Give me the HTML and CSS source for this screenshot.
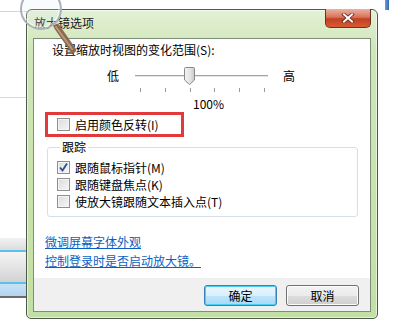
FILE: index.html
```html
<!DOCTYPE html>
<html lang="zh-CN">
<head>
<meta charset="utf-8">
<title>放大镜选项</title>
<link rel="stylesheet" href="styles.css">
</head>
<body>
<div class="desktop">
  <div class="bg-line top"></div>
  <div class="bg-line mid"></div>
  <div class="bg-blue"></div>
  <div class="bg-bars">
    <div class="bar b1"></div>
    <div class="bar blue"></div>
    <div class="bar b2"></div>
    <div class="bar blue"></div>
    <div class="bar b3"></div>
    <div class="bar dark"></div>
  </div>

  <div class="window">
    <div class="titlebar">
      <span class="title">放大镜选项</span>
      <span class="close">
        <svg width="16" height="10" viewBox="0 0 16 10"><path d="M4 1.5 L12 8.5 M12 1.5 L4 8.5" stroke="#6a2418" stroke-width="3.6" stroke-linecap="square"/><path d="M4 1.5 L12 8.5 M12 1.5 L4 8.5" stroke="#ffffff" stroke-width="2" stroke-linecap="square"/></svg>
      </span>
    </div>
    <div class="client">
      <div class="content">
        <div class="label">设置缩放时视图的变化范围(S):</div>
        <div class="slider-row">
          <span class="end">低</span>
          <span class="track">
            <span class="thumb">
              <svg width="11" height="18" viewBox="0 0 11 18"><defs><linearGradient id="tg" x1="0" y1="0" x2="1" y2="0"><stop offset="0" stop-color="#f4f4f4"/><stop offset="0.6" stop-color="#e2e2e2"/><stop offset="1" stop-color="#c8c8c8"/></linearGradient></defs><path d="M1.5 0.5 H9.5 A1 1 0 0 1 10.5 1.5 V13 L5.5 17.5 L0.5 13 V1.5 A1 1 0 0 1 1.5 0.5 Z" fill="url(#tg)" stroke="#8a8a8a"/></svg>
            </span>
          </span>
          <span class="end">高</span>
        </div>
        <div class="ticks"><i></i><i></i><i></i><i></i><i></i><i></i></div>
        <div class="pct">100%</div>
        <div class="highlight">
          <span class="cb"></span><span>启用颜色反转(I)</span>
        </div>
        <fieldset class="group">
          <legend>跟踪</legend>
          <div class="row"><span class="cb checked"><svg width="11" height="11" viewBox="0 0 11 11"><path d="M2 5.5 L4.5 8.5 L9 1.5" fill="none" stroke="#2c4f8c" stroke-width="1.8"/></svg></span><span>跟随鼠标指针(M)</span></div>
          <div class="row"><span class="cb"></span><span>跟随键盘焦点(K)</span></div>
          <div class="row"><span class="cb"></span><span>使放大镜跟随文本插入点(T)</span></div>
        </fieldset>
        <div class="links">
          <a class="link">微调屏幕字体外观</a>
          <a class="link">控制登录时是否启动放大镜。</a>
        </div>
      </div>
      <div class="footer">
        <button class="btn default">确定</button>
        <button class="btn">取消</button>
      </div>
    </div>
  </div>

  <svg class="lens" width="90" height="60" viewBox="0 0 90 60">
    <defs>
      <linearGradient id="hg" x1="0" y1="0" x2="1" y2="0">
        <stop offset="0" stop-color="#c9ab8c"/>
        <stop offset="1" stop-color="#7d5c42"/>
      </linearGradient>
    </defs>
    <line x1="57" y1="27" x2="73" y2="50" stroke="#8a6a50" stroke-width="6" stroke-linecap="round"/>
    <line x1="56" y1="27" x2="72" y2="49" stroke="#b8987a" stroke-width="2" stroke-linecap="round"/>
    <circle cx="41" cy="9" r="20" fill="rgba(225,232,238,0.18)" stroke="#a9b2ba" stroke-width="2"/>
    <circle cx="41" cy="9" r="18" fill="none" stroke="rgba(255,255,255,0.7)" stroke-width="1"/>
  </svg>
</div>
</body>
</html>
```
FILE: styles.css
```css
html, body {
  margin: 0;
  padding: 0;
  background: #ffffff;
}
body {
  font-family: "Noto Sans CJK SC", "Liberation Sans", sans-serif;
  font-size: 12px;
  color: #000;
}
.desktop {
  position: relative;
  width: 396px;
  height: 328px;
  overflow: hidden;
  background: #ffffff;
}
.bg-line {
  position: absolute;
  left: 0;
  width: 27px;
  height: 1px;
}
.bg-line.top { top: 11px; background: #cdd6de; }
.bg-line.mid { top: 97px; background: #d8d8d8; }
.bg-blue {
  position: absolute;
  left: 385px;
  top: 0;
  width: 4px;
  height: 10px;
  background: linear-gradient(90deg, #6f9fd8, #2f66b8);
}
.bg-bars {
  position: absolute;
  left: 0;
  top: 238px;
  width: 27px;
  display: flex;
  flex-direction: column;
}
.bar.b1 { height: 12px; background: linear-gradient(#f2f2f2, #dcdcdc); }
.bar.blue { height: 2px; background: #5cc0ec; }
.bar.b2 { height: 30px; background: linear-gradient(#f4f4f4, #e4e4e4 50%, #d2d2d2); }
.bar.b3 { height: 12px; background: linear-gradient(#c9e2f6, #b3d4ef); }
.bar.dark { height: 2px; background: #6a6a6a; }

.window {
  position: absolute;
  left: 26px;
  top: 9px;
  width: 352px;
  height: 310px;
  box-sizing: border-box;
  border: 1px solid #4f5a4c;
  border-radius: 6px 6px 5px 5px;
  background: linear-gradient(#e4f1d6, #cfe6b8 40px, #c2dfa4);
  box-shadow: inset 0 0 0 1px rgba(255,255,255,0.55);
}
.titlebar {
  height: 28px;
  display: flex;
  align-items: flex-start;
}
.title {
  padding: 6px 0 0 7px;
  line-height: 14px;
  font-size: 12px;
  color: #1a1a1a;
}
.close {
  margin-left: auto;
  margin-right: 6px;
  margin-top: -1px;
  width: 46px;
  height: 19px;
  box-sizing: border-box;
  border: 1px solid #6d3025;
  border-top: none;
  border-radius: 0 0 5px 5px;
  background: linear-gradient(#eab2a2, #d8745c 45%, #c2401f 55%, #d85a34);
  display: flex;
  align-items: center;
  justify-content: center;
}
.close svg { display: block; }
.client {
  margin: 0 6px;
  height: 274px;
  box-sizing: border-box;
  border: 1px solid #7f8e7a;
  background: #f0f0f0;
  display: flex;
  flex-direction: column;
}
.content {
  height: 239px;
  background: #ffffff;
  padding: 4px 0 0 0;
  box-sizing: border-box;
}
.label {
  line-height: 14px;
  padding-left: 18px;
}
.slider-row {
  margin-top: 10px;
  height: 18px;
  display: flex;
  align-items: center;
  padding-left: 73px;
}
.end { line-height: 14px; }
.track {
  position: relative;
  margin: 0 15px 0 16px;
  width: 133px;
  height: 2px;
  box-sizing: border-box;
  border-top: 1px solid #a3a3a3;
  background: #e6e6e6;
}
.thumb {
  position: absolute;
  left: 49px;
  top: -9px;
  width: 11px;
  height: 18px;
}
.thumb svg { display: block; }
.ticks {
  margin: 3px 0 0 101px;
  width: 133px;
  height: 4px;
  box-sizing: border-box;
  padding: 0 3px 0 5px;
  display: flex;
  justify-content: space-between;
}
.ticks i {
  display: block;
  width: 1px;
  height: 4px;
  background: #9a9a9a;
}
.pct {
  margin-top: 5px;
  line-height: 14px;
  padding-left: 159px;
}
.highlight {
  margin: 1px 0 0 11px;
  width: 139px;
  height: 25px;
  box-sizing: border-box;
  border: 3px solid #e23a3a;
  display: flex;
  align-items: center;
  padding-left: 9px;
  gap: 5px;
  line-height: 14px;
}
.cb {
  width: 13px;
  height: 13px;
  box-sizing: border-box;
  border: 1px solid #8f8f8f;
  background: linear-gradient(135deg, #dcdcdc, #f6f6f6);
  box-shadow: inset 0 0 0 1px #f4f4f4;
  display: flex;
  align-items: center;
  justify-content: center;
  flex: none;
}
.cb svg { display: block; }
.group {
  margin: 3px 0 0 13px;
  width: 311px;
  box-sizing: border-box;
  border: 1px solid #d5dfe5;
  border-radius: 3px;
  padding: 5px 0 6px 9px;
  min-width: 0;
}
.group legend {
  padding: 0 2px;
  margin-left: 3px;
  line-height: 14px;
}
.row {
  height: 17px;
  display: flex;
  align-items: center;
  gap: 5px;
  line-height: 14px;
}
.links {
  margin: 18px 0 0 11px;
  display: flex;
  flex-direction: column;
  align-items: flex-start;
  gap: 5px;
}
.link {
  line-height: 14px;
  color: #0a5fc4;
  text-decoration: underline;
  text-underline-offset: 1px;
}
.footer {
  flex: 1;
  display: flex;
  justify-content: flex-end;
  align-items: flex-start;
  gap: 9px;
  padding: 7px 11px 0 0;
}
.btn {
  width: 73px;
  height: 21px;
  box-sizing: border-box;
  font-family: "Noto Sans CJK SC", sans-serif;
  font-size: 12px;
  line-height: 14px;
  padding: 0;
  color: #000;
  border: 1px solid #707070;
  border-radius: 3px;
  background: linear-gradient(#f2f2f2, #ebebeb 50%, #dddddd 51%, #cfcfcf);
  box-shadow: inset 0 0 0 1px #fcfcfc;
}
.btn.default {
  border-color: #3c7fb1;
  background: linear-gradient(#eaf6fd, #d9f0fc 50%, #bee6fd 51%, #a7d9f5);
  box-shadow: inset 0 0 0 1px #48d0f8;
}
.lens {
  position: absolute;
  left: 0;
  top: 0;
  pointer-events: none;
}
```
